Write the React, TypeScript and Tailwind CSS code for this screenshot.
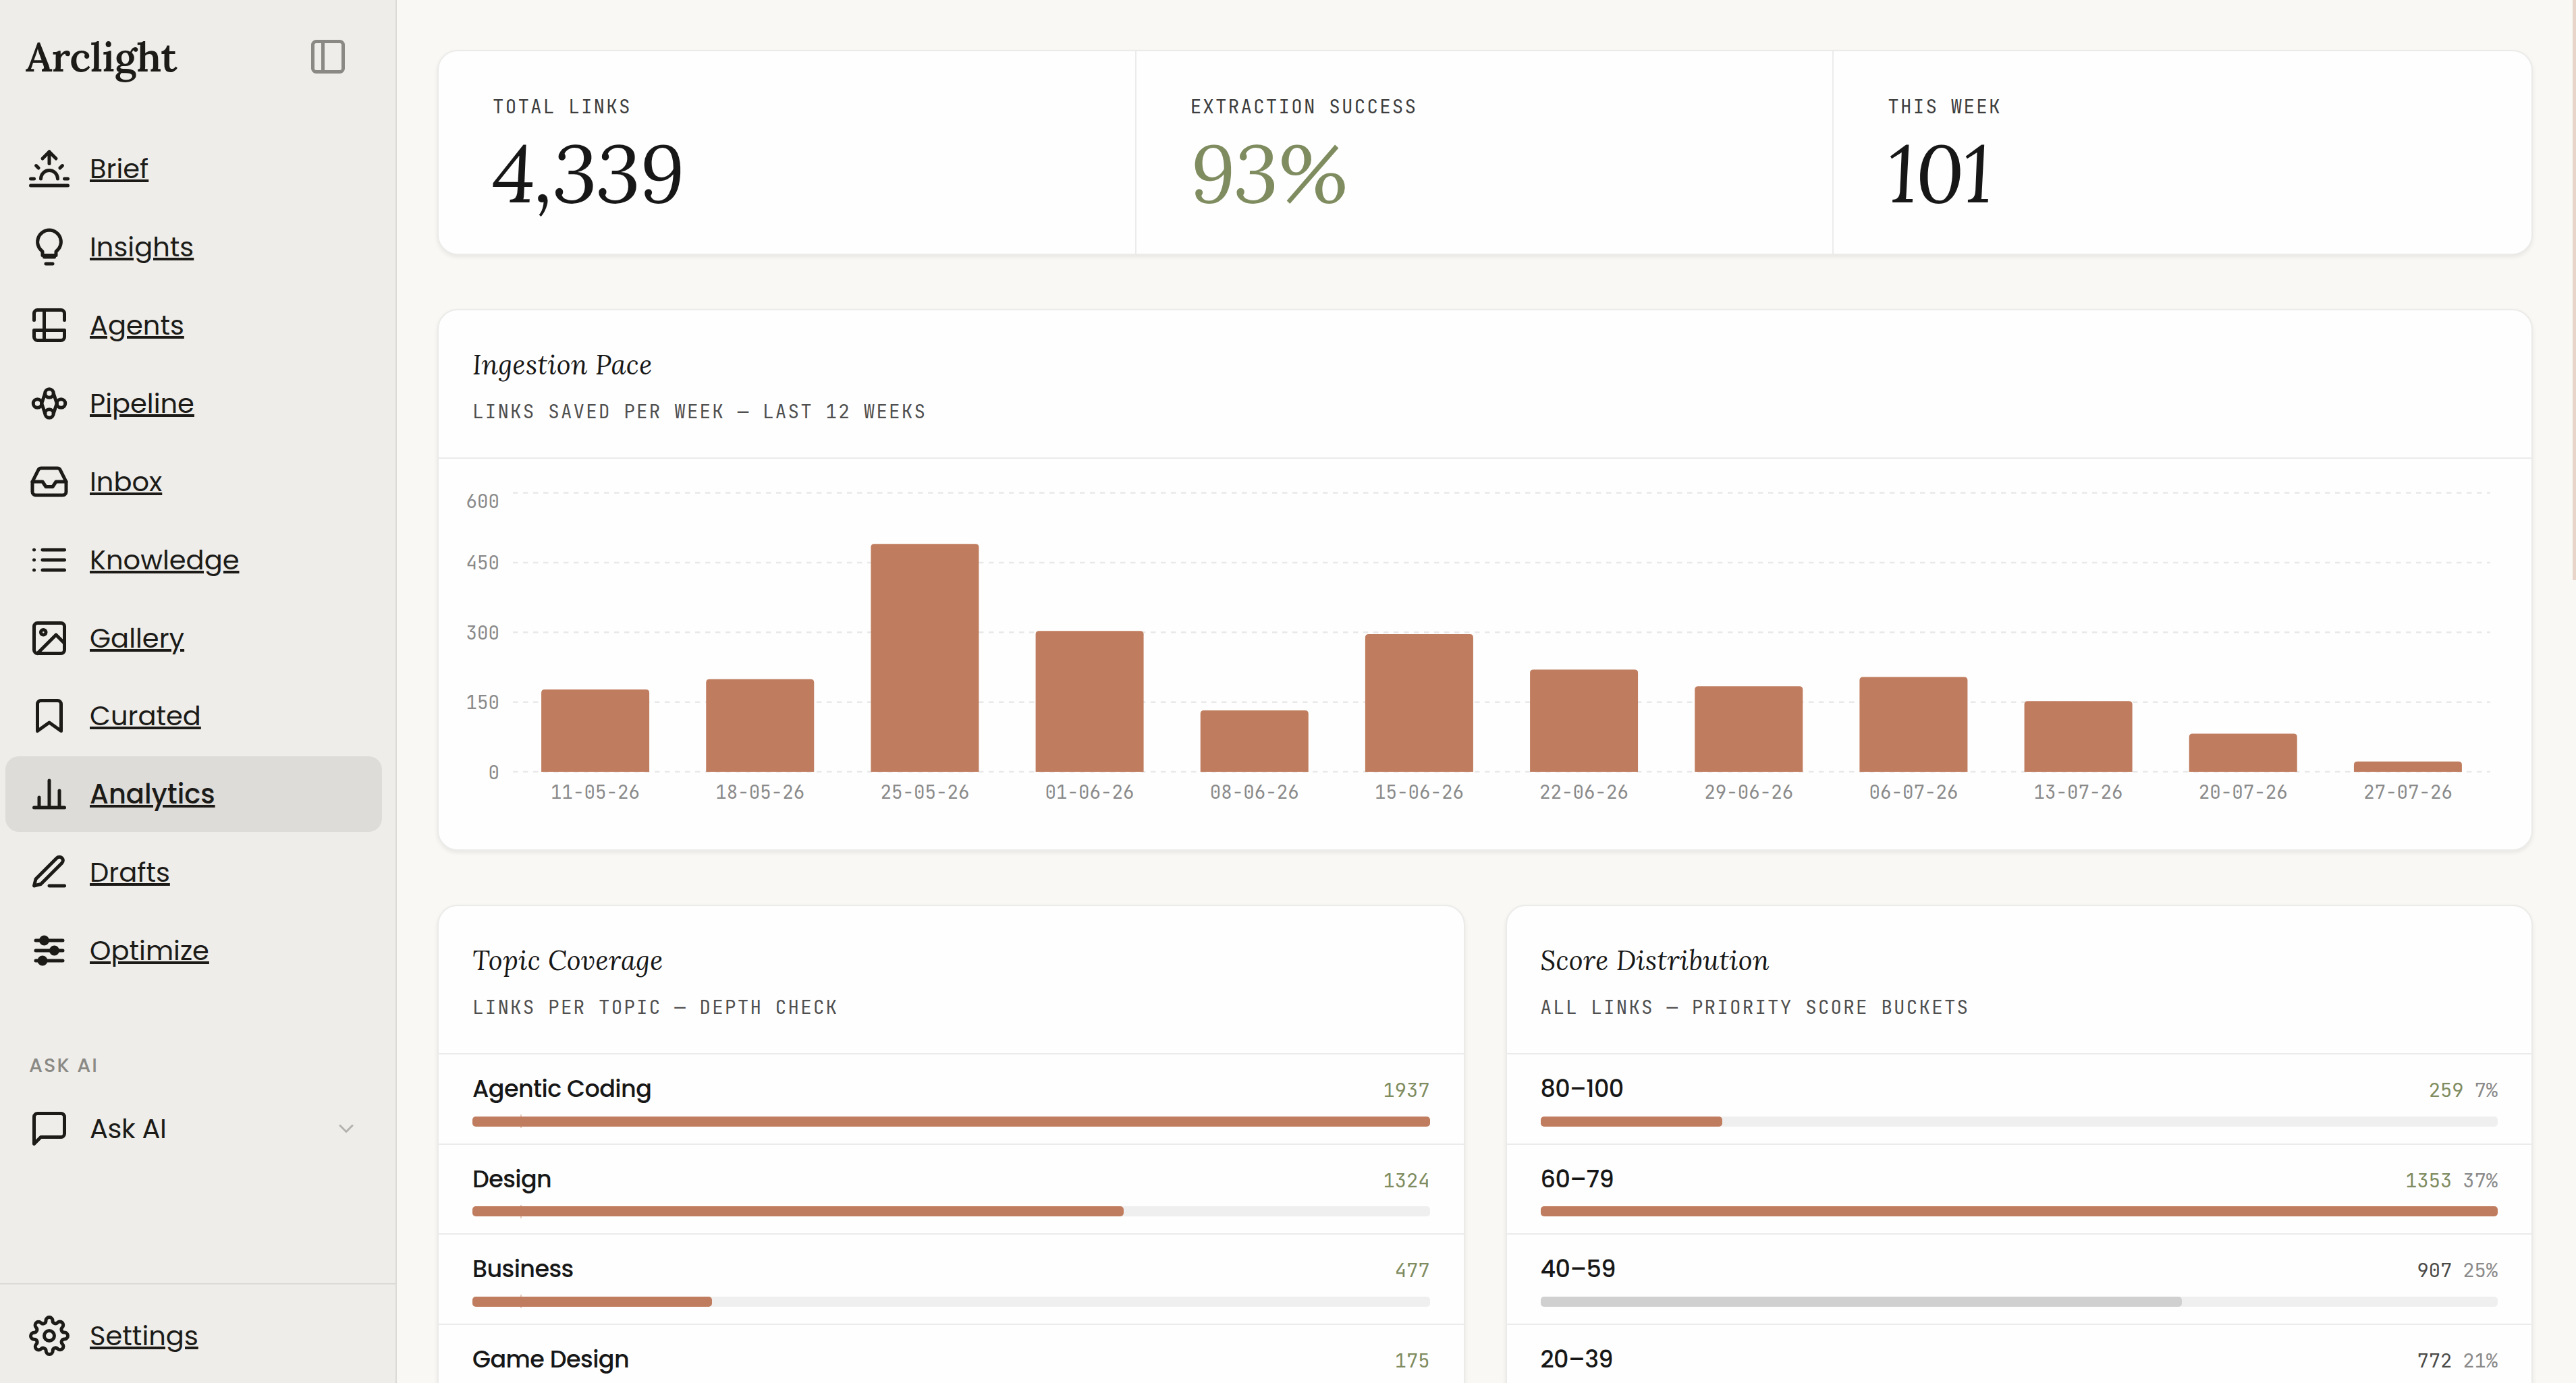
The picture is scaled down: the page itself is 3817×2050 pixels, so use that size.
import type { ComponentType, ReactNode } from "react";
import {
  FiBookmark,
  FiChevronDown,
  FiEdit3,
  FiImage,
  FiInbox,
  FiList,
  FiMessageSquare,
  FiSettings,
  FiSidebar,
  FiSunrise,
} from "react-icons/fi";

type IconProps = { className?: string };

type NavItem = {
  label: string;
  icon: ComponentType<IconProps>;
  active?: boolean;
};

type Meter = {
  label: string;
  count: number;
  fill: number;
  percent?: string;
  tone: "accent" | "muted";
};

const SANS = "font-['Poppins','Inter',sans-serif]";
const SERIF = "font-['Lora','Liberation_Serif',serif]";
const MONO = "font-['JetBrains_Mono','DejaVu_Sans_Mono',monospace]";

function StrokeIcon({ className, children }: IconProps & { children: ReactNode }) {
  return (
    <svg
      viewBox="0 0 24 24"
      fill="none"
      stroke="currentColor"
      strokeWidth={2}
      strokeLinecap="round"
      strokeLinejoin="round"
      className={className}
    >
      {children}
    </svg>
  );
}

function BulbIcon({ className }: IconProps) {
  return (
    <StrokeIcon className={className}>
      <path d="M9 18h6M10 22h4" />
      <path d="M12 2a7 7 0 0 0-4 12.7V17h8v-2.3A7 7 0 0 0 12 2z" />
    </StrokeIcon>
  );
}

function AgentsIcon({ className }: IconProps) {
  return (
    <StrokeIcon className={className}>
      <path d="M9 3H5a2 2 0 0 0-2 2v4m6-6h10a2 2 0 0 1 2 2v4M9 3v18m0 0h10a2 2 0 0 0 2-2v-4M9 21H5a2 2 0 0 1-2-2v-4m0 0h18" />
    </StrokeIcon>
  );
}

function PipelineIcon({ className }: IconProps) {
  return (
    <StrokeIcon className={className}>
      <circle cx="5" cy="12" r="2.5" />
      <circle cx="12" cy="6" r="2.5" />
      <circle cx="19" cy="12" r="2.5" />
      <circle cx="12" cy="18" r="2.5" />
      <path d="M7.5 12l2-6M14.5 6l2 6M16.5 12l-2 6M9.5 18l-2-6" />
    </StrokeIcon>
  );
}

function ChartIcon({ className }: IconProps) {
  return (
    <StrokeIcon className={className}>
      <path d="M18 20V10M12 20V4M6 20v-6M3 20h18" />
    </StrokeIcon>
  );
}

function SlidersIcon({ className }: IconProps) {
  return (
    <StrokeIcon className={className}>
      <path d="M4 6h16M4 12h16M4 18h16" />
      <circle cx="9" cy="6" r="2" fill="currentColor" />
      <circle cx="15" cy="12" r="2" fill="currentColor" />
      <circle cx="8" cy="18" r="2" fill="currentColor" />
    </StrokeIcon>
  );
}

const NAV_ITEMS: NavItem[] = [
  { label: "Brief", icon: FiSunrise },
  { label: "Insights", icon: BulbIcon },
  { label: "Agents", icon: AgentsIcon },
  { label: "Pipeline", icon: PipelineIcon },
  { label: "Inbox", icon: FiInbox },
  { label: "Knowledge", icon: FiList },
  { label: "Gallery", icon: FiImage },
  { label: "Curated", icon: FiBookmark },
  { label: "Analytics", icon: ChartIcon, active: true },
  { label: "Drafts", icon: FiEdit3 },
  { label: "Optimize", icon: SlidersIcon },
];

const STATS = [
  { label: "Total links", value: "4,339", valueClassName: "text-[#171717]" },
  { label: "Extraction success", value: "93%", valueClassName: "text-[#7f8c5f]" },
  { label: "This week", value: "101", valueClassName: "text-[#171717]" },
];

const WEEKS = [
  { label: "11-05-26", links: 177 },
  { label: "18-05-26", links: 199 },
  { label: "25-05-26", links: 490 },
  { label: "01-06-26", links: 303 },
  { label: "08-06-26", links: 132 },
  { label: "15-06-26", links: 296 },
  { label: "22-06-26", links: 220 },
  { label: "29-06-26", links: 184 },
  { label: "06-07-26", links: 204 },
  { label: "13-07-26", links: 152 },
  { label: "20-07-26", links: 82 },
  { label: "27-07-26", links: 22 },
];

const TOPICS: Meter[] = [
  { label: "Agentic Coding", count: 1937, fill: 100, tone: "accent" },
  { label: "Design", count: 1324, fill: 68, tone: "accent" },
  { label: "Business", count: 477, fill: 25, tone: "accent" },
  { label: "Game Design", count: 175, fill: 9, tone: "accent" },
];

const SCORES: Meter[] = [
  { label: "80–100", count: 259, percent: "7%", fill: 19, tone: "accent" },
  { label: "60–79", count: 1353, percent: "37%", fill: 100, tone: "accent" },
  { label: "40–59", count: 907, percent: "25%", fill: 67, tone: "muted" },
  { label: "20–39", count: 772, percent: "21%", fill: 57, tone: "muted" },
];

function NavRow({ item }: { item: NavItem }) {
  const Icon = item.icon;
  return (
    <a
      className={`flex h-28 items-center gap-[30px] rounded-[20px] px-[35px] text-[40px] leading-none text-[#1c1b18] ${
        item.active ? "bg-[#dddcd9] font-medium" : ""
      }`}
    >
      <Icon className="size-[60px] shrink-0" />
      <span className="leading-[60px] underline decoration-[4px] underline-offset-[2px]">{item.label}</span>
    </a>
  );
}

function Sidebar() {
  return (
    <aside className="flex w-[588px] shrink-0 flex-col border-r-2 border-[#dcdbd8] bg-[#eeedea]">
      <header className="flex h-[168px] shrink-0 items-center justify-between pl-[38px] pr-[70px]">
        <span className={`${SERIF} text-[60px] font-semibold leading-none tracking-[-0.01em] text-[#1c1b18]`}>
          Arclight
        </span>
        <FiSidebar className="size-[60px] text-[#8a8984]" />
      </header>

      <nav className="mr-5 ml-2 flex flex-col gap-[3.9px] pt-[26.2px]">
        {NAV_ITEMS.map((item) => (
          <NavRow key={item.label} item={item} />
        ))}
      </nav>

      <p className="mt-[93.5px] pl-[43px] text-[28.75px] font-medium uppercase leading-10 tracking-[0.07em] text-[#8a8984]">
        Ask AI
      </p>
      <button className="mt-[18px] mr-5 ml-2 flex h-28 items-center gap-[30px] px-[35px] text-left text-[40px] leading-none text-[#1c1b18]">
        <FiMessageSquare className="size-[60px] shrink-0" />
        <span className="flex-1 tracking-[-0.01em]">Ask AI</span>
        <FiChevronDown className="size-9 text-[#b3b2af]" />
      </button>

      <footer className="mt-auto h-[148px] border-t-2 border-[#dcdbd8] pt-5 pr-5 pl-2">
        <NavRow item={{ label: "Settings", icon: FiSettings }} />
      </footer>
    </aside>
  );
}

function Card({ className = "", children }: { className?: string; children: ReactNode }) {
  return (
    <section
      className={`shrink-0 overflow-hidden rounded-[30px] border-2 border-[#ebebe9] bg-[#fefefe] shadow-[0_3px_6px_rgba(0,0,0,0.07)] ${className}`}
    >
      {children}
    </section>
  );
}

function CardHeader({ title, subtitle }: { title: string; subtitle: string }) {
  return (
    <header className="h-[220px] border-b-2 border-[#ebebeb] px-[50px] pt-[55px]">
      <h2 className={`${SERIF} text-[40px] italic leading-[52px] tracking-[0.01em] text-[#171717]`}>{title}</h2>
      <p className={`${MONO} mt-[23px] text-[27.5px] uppercase leading-10 tracking-[0.08em] text-[#4f4f4f]`}>
        {subtitle}
      </p>
    </header>
  );
}

function StatsCard() {
  return (
    <Card className="grid h-[304px] grid-cols-3">
      {STATS.map((stat) => (
        <div key={stat.label} className="border-r-2 border-[#ebebeb] px-20 pt-[62px] last:border-r-0">
          <p className={`${MONO} text-[27.5px] uppercase leading-10 tracking-[0.08em] text-[#3d3d3d]`}>
            {stat.label}
          </p>
          <p
            className={`${SERIF} mt-[18px] text-[120px] italic leading-[120px] tracking-[-0.01em] ${stat.valueClassName}`}
          >
            {stat.value}
          </p>
        </div>
      ))}
    </Card>
  );
}

const PLOT = { left: 110, right: 3040, top: 50.5, bottom: 464, max: 600 };
const BAR_WIDTH = 160;
const BAR_RADIUS = 5;

// y offsets of the tick labels; the top one is pushed inside the plot
const TICKS = [
  { value: 600, labelY: 72.5 },
  { value: 450, labelY: 164 },
  { value: 300, labelY: 267.5 },
  { value: 150, labelY: 371 },
  { value: 0, labelY: 474.5 },
];

function scaleY(value: number) {
  return PLOT.bottom - (value / PLOT.max) * (PLOT.bottom - PLOT.top);
}

function barPath(x: number, y: number) {
  const right = x + BAR_WIDTH;
  return `M${x} ${PLOT.bottom}V${y + BAR_RADIUS}q0 ${-BAR_RADIUS} ${BAR_RADIUS} ${-BAR_RADIUS}H${right - BAR_RADIUS}q${BAR_RADIUS} 0 ${BAR_RADIUS} ${BAR_RADIUS}V${PLOT.bottom}z`;
}

function PaceChart() {
  const step = (PLOT.right - PLOT.left) / WEEKS.length;
  return (
    <svg viewBox="0 0 3101 579" className={`${MONO} block h-[579px] w-full text-[27.5px]`}>
      {TICKS.map((tick) => (
        <g key={tick.value}>
          <line
            x1={PLOT.left}
            x2={PLOT.right}
            y1={scaleY(tick.value)}
            y2={scaleY(tick.value)}
            stroke="#e9e9e9"
            strokeWidth={2.5}
            strokeDasharray="7.5 7.5"
          />
          <text x={90} y={tick.labelY} textAnchor="end" fill="#8a8a8a">
            {tick.value}
          </text>
        </g>
      ))}
      {WEEKS.map((week, i) => {
        const center = PLOT.left + step * (i + 0.5);
        return (
          <g key={week.label}>
            <path d={barPath(center - BAR_WIDTH / 2, scaleY(week.links))} fill="#c07c5e" />
            <text x={center} y={504} textAnchor="middle" fill="#8a8a8a">
              {week.label}
            </text>
          </g>
        );
      })}
    </svg>
  );
}

function MeterRow({ meter, marker }: { meter: Meter; marker: boolean }) {
  return (
    <li className="h-[133.5px] border-b-2 border-[#ebebeb] px-[50px] pt-[25px]">
      <div className="flex h-[51.5px] items-baseline justify-between leading-[51.5px]">
        <span className="text-[35px] font-medium tracking-[-0.017em] text-[#171717]">{meter.label}</span>
        <span className={`${MONO} flex gap-4 text-[28.75px]`}>
          <span className={meter.tone === "accent" ? "text-[#7f8c5f]" : "text-[#4a4a48]"}>{meter.count}</span>
          {meter.percent && <span className="text-[#8a8a8a]">{meter.percent}</span>}
        </span>
      </div>
      <div className="relative mt-[15px] h-[15px] rounded-[5px] bg-[#efefef]">
        <div
          className={`h-full rounded-[5px] ${meter.tone === "accent" ? "bg-[#c07c5e]" : "bg-[#d0d0d0]"}`}
          style={{ width: `${meter.fill}%` }}
        />
        {marker && <span className="absolute -top-[2.5px] left-[5%] h-5 w-0.5 bg-[#c07c5e]/40" />}
      </div>
    </li>
  );
}

function MeterCard({
  title,
  subtitle,
  meters,
  marker = false,
}: {
  title: string;
  subtitle: string;
  meters: Meter[];
  marker?: boolean;
}) {
  return (
    <Card>
      <CardHeader title={title} subtitle={subtitle} />
      <ul>
        {meters.map((meter) => (
          <MeterRow key={meter.label} meter={meter} marker={marker} />
        ))}
      </ul>
    </Card>
  );
}

export default function App() {
  return (
    <div className={`${SANS} flex h-[2050px] w-[3817px] overflow-hidden bg-[#f9f8f4]`}>
      <Sidebar />
      <main className="flex min-w-0 flex-1 flex-col gap-20 overflow-hidden pt-[74px] pr-[59px] pl-[60px]">
        <StatsCard />
        <Card className="h-[803px]">
          <CardHeader title="Ingestion Pace" subtitle="Links saved per week — last 12 weeks" />
          <PaceChart />
        </Card>
        <div className="grid shrink-0 grid-cols-2 gap-[60px]">
          <MeterCard title="Topic Coverage" subtitle="Links per topic — depth check" meters={TOPICS} marker />
          <MeterCard title="Score Distribution" subtitle="All links — priority score buckets" meters={SCORES} />
        </div>
      </main>
      <div className="h-[860px] w-[5px] shrink-0 bg-[#e8d5c9]" />
    </div>
  );
}
